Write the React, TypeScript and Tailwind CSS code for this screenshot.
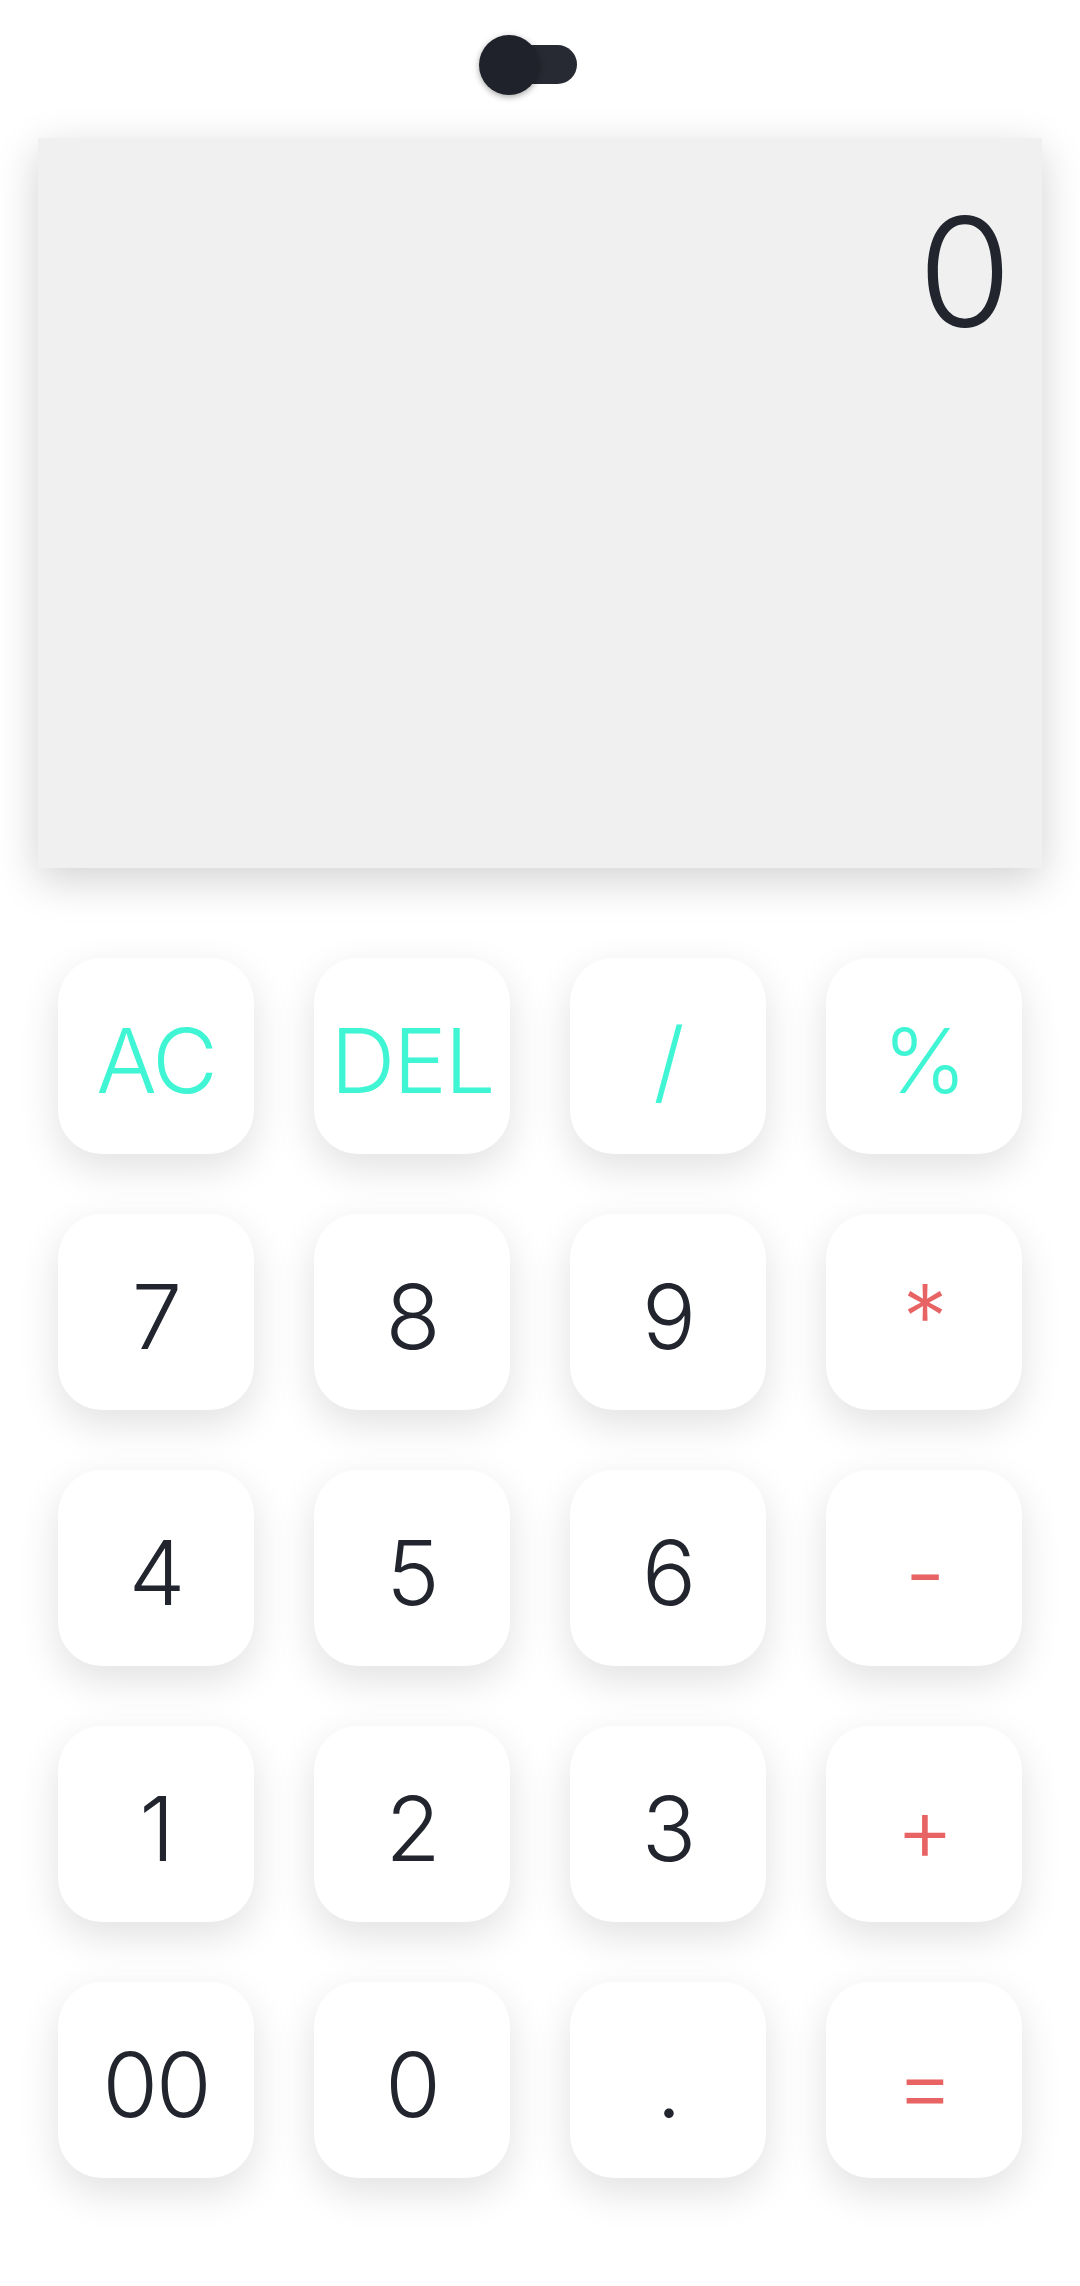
import React from "react";

type Key = { label: string; color: "cyan" | "dark" | "red" };

const keys: Key[] = [
  { label: "AC", color: "cyan" },
  { label: "DEL", color: "cyan" },
  { label: "/", color: "cyan" },
  { label: "%", color: "cyan" },
  { label: "7", color: "dark" },
  { label: "8", color: "dark" },
  { label: "9", color: "dark" },
  { label: "*", color: "red" },
  { label: "4", color: "dark" },
  { label: "5", color: "dark" },
  { label: "6", color: "dark" },
  { label: "-", color: "red" },
  { label: "1", color: "dark" },
  { label: "2", color: "dark" },
  { label: "3", color: "dark" },
  { label: "+", color: "red" },
  { label: "00", color: "dark" },
  { label: "0", color: "dark" },
  { label: ".", color: "dark" },
  { label: "=", color: "red" },
];

const colorClass: Record<Key["color"], string> = {
  cyan: "text-[#3ff5d4]",
  dark: "text-[#22252e]",
  red: "text-[#e86464]",
};

export default function App() {
  return (
    <div className="min-h-[2286px] w-[1080px] bg-white font-['Inter','Liberation_Sans',sans-serif]">
      <div className="bg-white pt-[45px] pb-[60px]">
        <div className="flex justify-center">
          <div className="relative h-[39px] w-[80px] -translate-x-[3px] rounded-full bg-[#272a33]">
            <div className="absolute -left-[18px] -top-[10px] h-[60px] w-[60px] rounded-full bg-[#1f222a] shadow-[0_2px_6px_rgba(0,0,0,0.35)]" />
          </div>
        </div>
        <div className="mx-[38px] mt-[54px] h-[730px] bg-[#f0f0f0] pr-[34px] pt-[58px] text-right shadow-[0_12px_40px_rgba(0,0,0,0.18)]">
          <span className="text-[152px] font-[350] leading-none tracking-[-4px] text-[#22252e]">0</span>
        </div>
      </div>
      <div className="relative bg-white pt-[30px] pb-[106px]">
        <div className="grid grid-cols-[repeat(4,196px)] justify-center gap-[60px]">
          {keys.map((k) => (
            <button
              key={k.label}
              className={`flex h-[196px] w-[196px] items-center justify-center rounded-[44px] bg-white pt-[10px] text-[90px] font-[350] leading-none tracking-[-2px] shadow-[0_14px_40px_rgba(0,0,0,0.12)] ${colorClass[k.color]}`}
            >
              {k.label}
            </button>
          ))}
        </div>
      </div>
    </div>
  );
}
